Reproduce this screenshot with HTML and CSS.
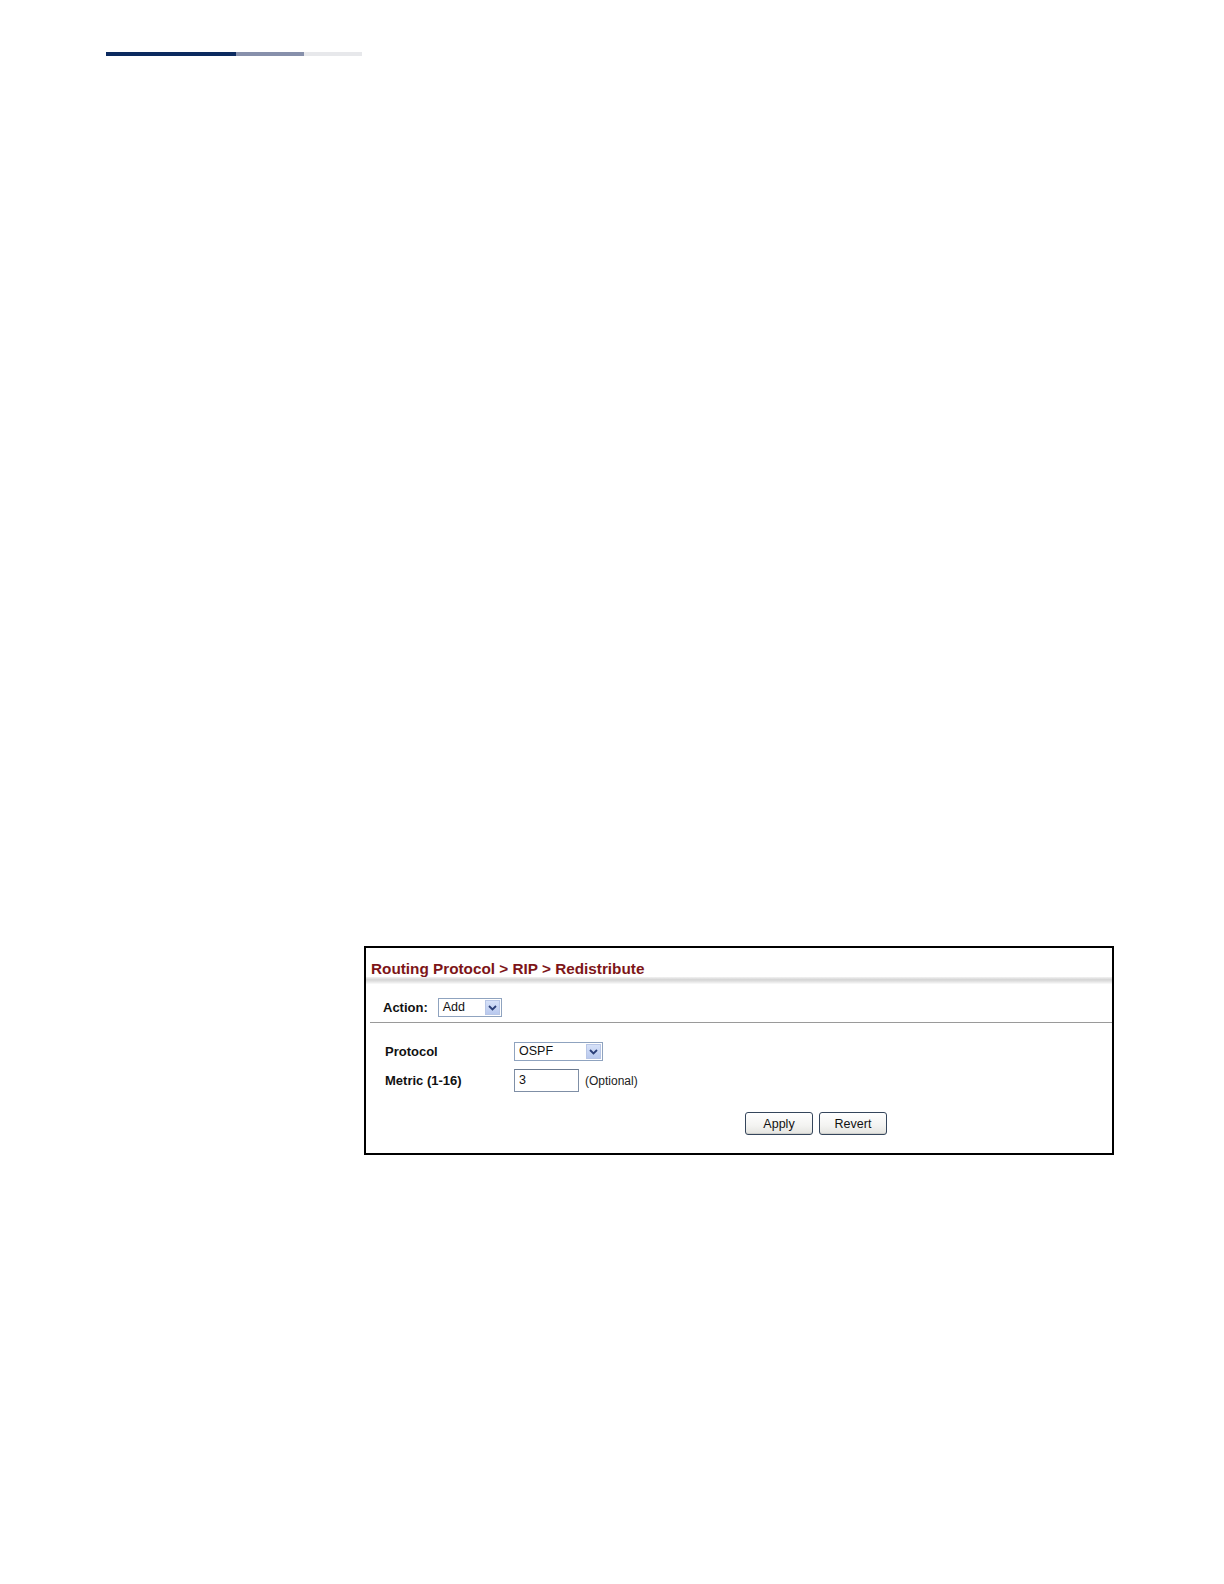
FILE: index.html
```html
<!DOCTYPE html>
<html>
<head>
<meta charset="utf-8">
<link rel="stylesheet" href="styles.css">
</head>
<body>
<div class="topbar"><span class="seg seg1"></span><span class="seg seg2"></span><span class="seg seg3"></span></div>
<div class="panel">
  <div class="title">Routing Protocol &gt; RIP &gt; Redistribute</div>
  <div class="band"></div>
  <div class="action-row">
    <span class="label">Action:</span>
    <div class="select sel-action"><span class="sel-text">Add</span><span class="sel-btn"><svg width="9" height="6" viewBox="0 0 9 6"><path d="M1 1 L4.5 4.5 L8 1" fill="none" stroke="#2b3f78" stroke-width="1.8"/></svg></span></div>
  </div>
  <div class="divider"></div>
  <div class="form">
    <div class="row">
      <span class="label col">Protocol</span>
      <div class="select sel-proto"><span class="sel-text">OSPF</span><span class="sel-btn"><svg width="9" height="6" viewBox="0 0 9 6"><path d="M1 1 L4.5 4.5 L8 1" fill="none" stroke="#2b3f78" stroke-width="1.8"/></svg></span></div>
    </div>
    <div class="row">
      <span class="label col">Metric (1-16)</span>
      <div class="input">3</div>
      <span class="hint">(Optional)</span>
    </div>
  </div>
  <div class="buttons">
    <button class="btn">Apply</button>
    <button class="btn">Revert</button>
  </div>
</div>
</body>
</html>
```
FILE: styles.css
```css
html, body {
  margin: 0;
  padding: 0;
  background: #ffffff;
}
body {
  font-family: "Liberation Sans", Arial, sans-serif;
  color: #000;
}
.topbar {
  display: flex;
  margin: 52px 0 0 106px;
  height: 4px;
}
.seg { display: block; height: 4px; }
.seg1 { width: 130px; background: #0b2a5f; }
.seg2 { width: 68px; background: #8790ab; }
.seg3 { width: 58px; background: #e7e8eb; }

.panel {
  margin: 890px 0 0 364px;
  width: 750px;
  height: 209px;
  box-sizing: border-box;
  border: 2px solid #000;
  display: flex;
  flex-direction: column;
}
.title {
  padding: 11px 0 0 5px;
  height: 29px;
  box-sizing: border-box;
  font-size: 15.3px;
  line-height: 19px;
  font-weight: bold;
  color: #7d1518;
}
.band {
  height: 7px;
  background: linear-gradient(#f2f2f2, #d4d4d4 40%, #e6e6e6 70%, #fbfbfb);
}
.action-row {
  display: flex;
  align-items: center;
  gap: 10px;
  padding: 9px 0 0 17px;
  height: 38px;
  box-sizing: border-box;
}
.label {
  font-size: 13px;
  font-weight: bold;
  color: #111;
}
.select {
  display: flex;
  align-items: stretch;
  height: 19px;
  box-sizing: border-box;
  border: 1px solid #8fa3bf;
  background: #fff;
}
.sel-text {
  flex: 1;
  font-size: 12.5px;
  line-height: 17px;
  padding-left: 4px;
  color: #111;
}
.sel-btn {
  width: 15px;
  margin: 1px;
  background: linear-gradient(#d6e1f8, #b9c9ee);
  border: 1px solid #b8c6e6;
  box-sizing: border-box;
  display: flex;
  align-items: center;
  justify-content: center;
}
.sel-action { width: 64px; }
.sel-proto { width: 89px; }
.divider {
  height: 1px;
  background: #9a9a9a;
  margin-left: 4px;
}
.form {
  display: flex;
  flex-direction: column;
  padding: 18px 0 0 19px;
  gap: 8px;
}
.row {
  display: flex;
  align-items: center;
  height: 21px;
}
.col { width: 129px; }
.input {
  width: 65px;
  height: 23px;
  box-sizing: border-box;
  border: 1px solid #7f8fa6;
  border-top-color: #6b7a90;
  font-size: 12.5px;
  line-height: 21px;
  padding-left: 4px;
  color: #111;
}
.hint {
  font-size: 12px;
  margin-left: 6px;
  color: #222;
}
.buttons {
  display: flex;
  gap: 6px;
  padding: 21px 0 0 379px;
}
.btn {
  width: 68px;
  height: 23px;
  box-sizing: border-box;
  border: 1px solid #35465c;
  border-radius: 3px;
  background: linear-gradient(#ffffff, #f3f3f1 60%, #e4e4e0);
  font-family: "Liberation Sans", Arial, sans-serif;
  font-size: 12.5px;
  color: #111;
  padding: 0;
  box-shadow: inset 0 -1px 0 #d0d0cc;
}
```
